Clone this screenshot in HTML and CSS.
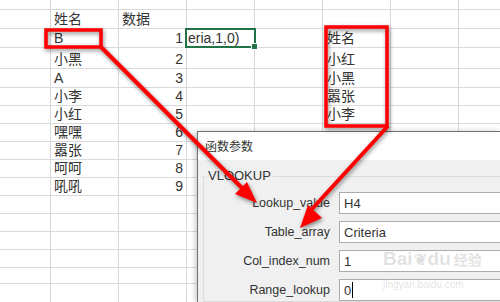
FILE: index.html
```html
<!DOCTYPE html>
<html lang="zh-CN">
<head>
  <meta charset="UTF-8" />
  <title>VLOOKUP</title>
  <link rel="stylesheet" href="styles.css">
</head>
<body>
  <div class="sheet">
    <div class="row h10"></div>
    <div class="row h19">
      <div class="cell"></div>
      <div class="cell">姓名</div>
      <div class="cell">数据</div>
    </div>
    <div class="row h19">
      <div class="cell"></div>
      <div class="cell">B</div>
      <div class="cell num">1</div>
      <div class="cell selected">eria,1,0)</div>
      <div class="cell"></div>
      <div class="cell list">姓名</div>
    </div>
    <div class="row h21">
      <div class="cell"></div>
      <div class="cell">小黑</div>
      <div class="cell num">2</div>
      <div class="cell"></div>
      <div class="cell"></div>
      <div class="cell list">小红</div>
    </div>
    <div class="row h19">
      <div class="cell"></div>
      <div class="cell">A</div>
      <div class="cell num">3</div>
      <div class="cell"></div>
      <div class="cell"></div>
      <div class="cell list">小黑</div>
    </div>
    <div class="row">
      <div class="cell"></div>
      <div class="cell">小李</div>
      <div class="cell num">4</div>
      <div class="cell"></div>
      <div class="cell"></div>
      <div class="cell list">嚣张</div>
    </div>
    <div class="row">
      <div class="cell"></div>
      <div class="cell">小红</div>
      <div class="cell num">5</div>
      <div class="cell"></div>
      <div class="cell"></div>
      <div class="cell list">小李</div>
    </div>
    <div class="row">
      <div class="cell"></div>
      <div class="cell">嘿嘿</div>
      <div class="cell num">6</div>
    </div>
    <div class="row">
      <div class="cell"></div>
      <div class="cell">嚣张</div>
      <div class="cell num">7</div>
    </div>
    <div class="row">
      <div class="cell"></div>
      <div class="cell">呵呵</div>
      <div class="cell num">8</div>
    </div>
    <div class="row">
      <div class="cell"></div>
      <div class="cell">吼吼</div>
      <div class="cell num">9</div>
    </div>
    <div class="row"></div>
    <div class="row"></div>
    <div class="row"></div>
    <div class="row"></div>
    <div class="row last"></div>
  </div>

  <div class="dialog">
    <div class="dialog-title">函数参数</div>
    <div class="dialog-body">
      <fieldset class="group">
        <legend>VLOOKUP</legend>
        <div class="args">
          <label>Lookup_value</label>
          <div class="field">H4</div>
          <label>Table_array</label>
          <div class="field">Criteria</div>
          <label>Col_index_num</label>
          <div class="field">1</div>
          <label>Range_lookup</label>
          <div class="field">0<span class="caret"></span></div>
        </div>
      </fieldset>
    </div>
  </div>

  <div class="watermark">
    <div class="wm-logo">Bai<span class="paw">&#x2766;</span>du<span class="wm-cn">经验</span></div>
    <div class="wm-url">jingyan.baidu.com</div>
  </div>

  <!-- red annotations -->
  <svg class="marks" width="500" height="302" viewBox="0 0 500 302">
    <g fill="none" stroke="#f00" stroke-width="3.5">
      <rect x="46" y="30" width="55" height="17" />
      <rect x="326" y="27" width="61" height="99" />
      <line x1="100" y1="46" x2="244" y2="190" stroke-width="4" />
      <line x1="388" y1="126" x2="312" y2="209" stroke-width="4" />
    </g>
    <g fill="#f00">
      <polygon points="257,203 235,194 247,182" />
      <polygon points="300,228 308,205 322,218" />
    </g>
  </svg>
</body>
</html>
```
FILE: styles.css
```css
* {
  box-sizing: border-box;
}

html, body {
  margin: 0;
  width: 500px;
  height: 302px;
  overflow: hidden;
  background: #fff;
}

body {
  position: relative;
  font-family: "Liberation Sans", "Noto Sans CJK SC", sans-serif;
  color: #333;
}

/* Spreadsheet grid */
.sheet {
  width: 500px;
  height: 302px;
  overflow: hidden;
  background-image: linear-gradient(to right, transparent 67px, #d8d8d8 67px);
  background-size: 68px 100%;
  background-position: -17px 0;
}

.row {
  display: grid;
  grid-template-columns: 50px repeat(6, 68px) 42px;
  height: 18px;
  border-bottom: 1px solid #dadada;
}

.h10 { height: 10px; }
.h19 { height: 19px; }
.h21 { height: 21px; }
.last { height: 16px; }

.cell {
  display: flex;
  align-items: flex-end;
  padding: 0 3px 0 4px;
  font-size: 14px;
  line-height: 17px;
  white-space: nowrap;
  overflow: hidden;
}

.num {
  justify-content: flex-end;
  padding-right: 3px;
}

.list {
  padding-left: 5px;
}

.selected {
  position: relative;
  overflow: visible;
  padding-left: 2px;
  outline: 2px solid #217346;
  outline-offset: -1px;
  margin-right: -1px;
}

.selected::after {
  content: "";
  position: absolute;
  right: -3px;
  bottom: -3px;
  width: 5px;
  height: 5px;
  background: #217346;
  border: 1px solid #fff;
}

/* Function arguments dialog */
.dialog {
  position: absolute;
  left: 197px;
  top: 131px;
  width: 303px;
  height: 171px;
  overflow: hidden;
  border: 1px solid #707070;
  border-right: none;
  border-bottom: none;
  background: #f0f0f0;
  box-shadow: -2px 0 5px rgba(0,0,0,0.2);
  font-size: 12px;
}

.dialog-title {
  height: 28px;
  line-height: 28px;
  padding-left: 7px;
  background: #fff;
  font-family: "Noto Sans CJK SC", sans-serif;
  font-size: 12px;
}

.dialog-body {
  padding: 8px 0 0 5px;
}

.group {
  margin: 0;
  padding: 8px 0 0 0;
  border: 1px solid #dcdcdc;
  border-right: none;
}

.group legend {
  margin-left: 2px;
  padding: 0 2px;
  font-size: 13px;
  line-height: 16px;
}

.args {
  display: grid;
  grid-template-columns: 126px 1fr;
  column-gap: 9px;
  row-gap: 7px;
  align-items: center;
}

.args label {
  text-align: right;
  font-size: 12.5px;
}

.field {
  display: flex;
  align-items: center;
  height: 22px;
  padding-left: 4px;
  background: #fff;
  border: 1px solid #acacac;
  border-right: none;
  font-size: 13px;
}

.caret {
  display: inline-block;
  width: 1px;
  height: 16px;
  margin-left: 1px;
  background: #000;
}

/* Watermark */
.watermark {
  position: absolute;
  left: 383px;
  top: 248px;
  white-space: nowrap;
  color: rgba(120,120,120,0.22);
  text-shadow: 0 0 1px rgba(255,255,255,0.8);
  pointer-events: none;
}

.wm-logo {
  font-family: "Liberation Sans", sans-serif;
  font-size: 19px;
  font-weight: bold;
  line-height: 22px;
}

.paw {
  font-size: 16px;
  margin: 0 1px;
}

.wm-cn {
  margin-left: 3px;
  font-family: "Noto Sans CJK SC", sans-serif;
  font-size: 14px;
}

.wm-url {
  margin-top: 8px;
  font-size: 10px;
  line-height: 12px;
}

/* Annotations */
.marks {
  position: absolute;
  left: 0;
  top: 0;
  pointer-events: none;
  filter: drop-shadow(1px 2px 2px rgba(0,0,0,0.45));
}
```
